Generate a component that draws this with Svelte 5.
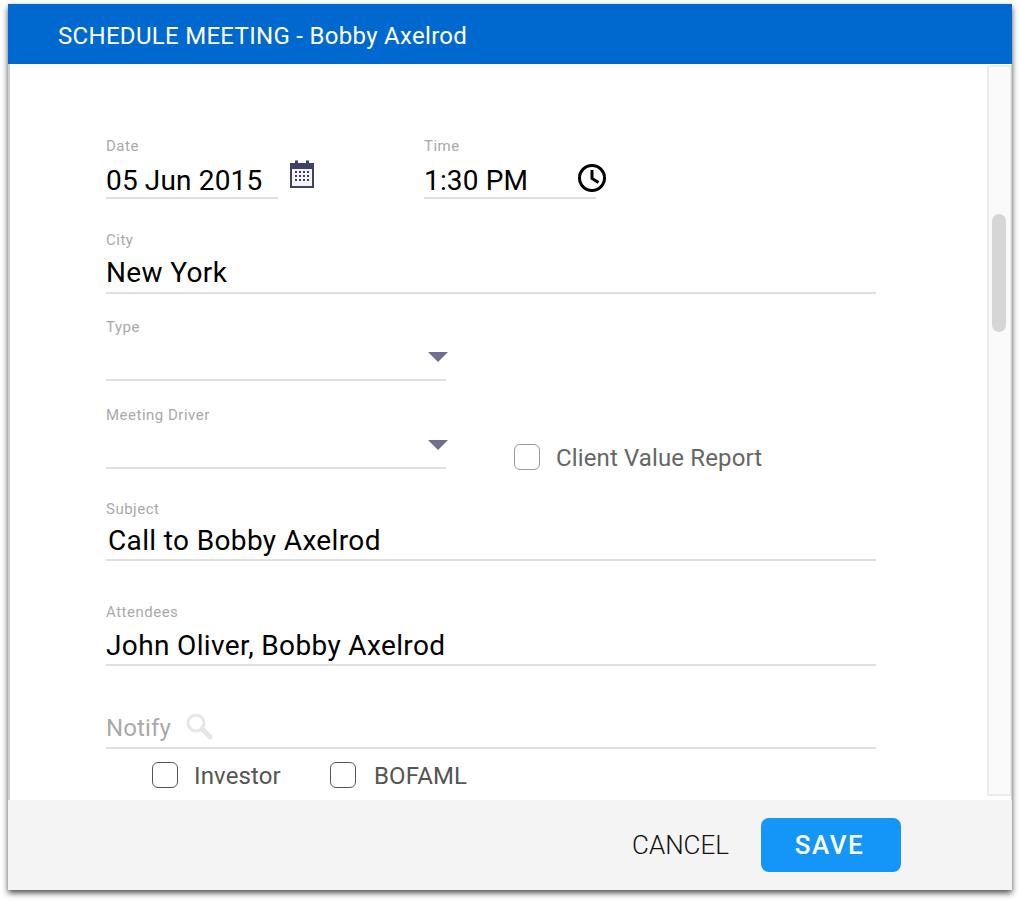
<script>
  let city = 'New York';
  let subject = 'Call to Bobby Axelrod';
  let attendees = 'John Oliver, Bobby Axelrod';
</script>

<div class="page">
  <div class="dialog">
    <header class="title">SCHEDULE MEETING - Bobby Axelrod</header>

    <div class="body">
      <form class="form">
        <div class="row date-row">
          <div class="field short">
            <span class="label">Date</span>
            <div class="value">05 Jun 2015</div>
            <svg class="cal" width="26" height="30" viewBox="0 0 26 30">
              <path fill="#3d4166" d="M1 4h5V1.5h3V4h8V1.5h3V4h5v25H1zM3 10v17h20V10z" />
              <rect x="3" y="10" width="20" height="17" fill="#f4f4f8" />
              <g fill="#3d4166">
                <rect x="6" y="12" width="2" height="2" /><rect x="10" y="12" width="2" height="2" /><rect x="14" y="12" width="2" height="2" /><rect x="18" y="12" width="2" height="2" />
                <rect x="6" y="16" width="2" height="2" /><rect x="10" y="16" width="2" height="2" /><rect x="14" y="16" width="2" height="2" /><rect x="18" y="16" width="2" height="2" />
                <rect x="6" y="20" width="2" height="2" /><rect x="10" y="20" width="2" height="2" /><rect x="14" y="20" width="2" height="2" /><rect x="18" y="20" width="2" height="2" />
              </g>
            </svg>
          </div>
          <div class="field short">
            <span class="label">Time</span>
            <div class="value">1:30 PM</div>
            <svg class="clock" width="30" height="30" viewBox="0 0 30 30" fill="none" stroke="#000" stroke-width="3">
              <circle cx="15" cy="15" r="12.5" />
              <path d="M15 7v8.500l6.500 4" />
            </svg>
          </div>
        </div>

        <div class="field city">
          <span class="label">City</span>
          <div class="value">{city}</div>
        </div>

        <div class="field select type">
          <span class="label">Type</span>
          <div class="value"></div>
          <span class="arrow"></span>
        </div>

        <div class="row driver-row">
          <div class="field select">
            <span class="label">Meeting Driver</span>
            <div class="value"></div>
            <span class="arrow"></span>
          </div>
          <label class="check report">
            <span class="box"></span>
            <span class="text">Client Value Report</span>
          </label>
        </div>

        <div class="field subject">
          <span class="label">Subject</span>
          <div class="value indented">{subject}</div>
        </div>

        <div class="field attendees">
          <span class="label">Attendees</span>
          <div class="value">{attendees}</div>
        </div>

        <div class="notify">
          <span>Notify</span>
          <svg width="28" height="28" viewBox="0 0 28 28" fill="none" stroke="#e6e6e6">
            <circle cx="11" cy="11" r="8" stroke-width="3" />
            <path d="M17 17l8 8" stroke-width="5" stroke-linecap="round" />
          </svg>
        </div>

        <div class="row checks">
          <label class="check investor"><span class="box dark"></span><span class="text">Investor</span></label>
          <label class="check bofaml"><span class="box dark"></span><span class="text">BOFAML</span></label>
        </div>
      </form>

      <div class="scrollbar"><div class="thumb"></div></div>
    </div>

    <footer class="footer">
      <button type="button" class="cancel">CANCEL</button>
      <button type="button" class="save">SAVE</button>
    </footer>
  </div>
</div>

<style>
  :global(body) {
    margin: 0;
    background: #fff;
    font-family: Roboto, "Liberation Sans", sans-serif;
  }

  .page {
    height: 902px;
    box-sizing: border-box;
    padding: 4px 8px 12px;
  }

  .dialog {
    height: 886px;
    display: flex;
    flex-direction: column;
    background: #cfcfcf;
    box-shadow: 0 3px 6px rgba(0, 0, 0, 0.7);
  }

  .title {
    height: 60px;
    flex: none;
    box-sizing: border-box;
    padding-left: 50px;
    background: #0069cf;
    color: #fff;
    font-size: 24px;
    line-height: 64px;
    letter-spacing: 0.3px;
  }

  .body {
    height: 736px;
    flex: none;
    margin: 0 1px 0 2px;
    display: flex;
    background: #fff;
    overflow: hidden;
  }

  .form {
    flex: 1;
    padding: 72px 0 0 96px;
    box-sizing: border-box;
  }

  .row {
    display: flex;
  }

  .date-row {
    gap: 146px;
  }

  .field {
    position: relative;
    width: 770px;
    border-bottom: 2px solid #e0e0e0;
    box-sizing: border-box;
  }

  .short {
    width: 172px;
    height: 63px;
  }

  .short .value {
    margin-top: 5px;
    letter-spacing: 0.15px;
  }

  .select {
    width: 340px;
    height: 64px;
  }

  .label {
    display: block;
    height: 20px;
    font-size: 15px;
    line-height: 20px;
    letter-spacing: 0.5px;
    color: #a9a9a9;
  }

  .value {
    font-size: 28px;
    line-height: 40px;
    letter-spacing: 0.36px;
    color: #000;
    white-space: nowrap;
  }

  .indented {
    padding-left: 2px;
  }

  .cal {
    position: absolute;
    left: 183px;
    top: 23px;
  }

  .clock {
    position: absolute;
    left: 153px;
    top: 27px;
  }

  .city {
    height: 64px;
    margin-top: 31px;
  }

  .city .value,
  .subject .value {
    margin-top: 3px;
  }

  .subject .value {
    margin-top: 2px;
  }

  .attendees .value {
    margin-top: 4px;
  }

  .type {
    margin-top: 23px;
  }

  .arrow {
    position: absolute;
    left: 322px;
    top: 35px;
    border-left: 10px solid transparent;
    border-right: 10px solid transparent;
    border-top: 10px solid #6d6f8e;
  }

  .driver-row {
    height: 64px;
    margin-top: 24px;
    align-items: flex-start;
  }

  .check {
    display: flex;
    align-items: flex-start;
    gap: 16px;
    font-size: 24px;
    letter-spacing: 0.13px;
    color: #666;
  }

  .text {
    margin-top: 1px;
    line-height: 28px;
  }

  .report {
    margin: 38px 0 0 68px;
  }

  .box {
    width: 26px;
    height: 26px;
    margin-top: 1px;
    flex: none;
    box-sizing: border-box;
    border: 1px solid #999;
    border-radius: 6px;
    background: #fff;
  }

  .box.dark {
    border-color: #555;
  }

  .subject {
    height: 62px;
    margin-top: 30px;
  }

  .attendees {
    height: 64px;
    margin-top: 41px;
  }

  .notify {
    width: 770px;
    height: 63px;
    margin-top: 20px;
    box-sizing: border-box;
    display: flex;
    align-items: flex-end;
    gap: 14px;
    padding-bottom: 5px;
    border-bottom: 2px solid #e0e0e0;
    font-size: 24px;
    letter-spacing: 0.13px;
    color: #aaa;
  }

  .notify svg {
    margin-bottom: 2px;
  }

  .checks {
    margin: 12px 0 0 46px;
  }

  .checks .check {
    color: #555;
  }

  .investor {
    width: 178px;
  }

  .bofaml {
    gap: 18px;
  }

  .scrollbar {
    width: 24px;
    height: 731px;
    margin-top: 1px;
    flex: none;
    box-sizing: border-box;
    padding-top: 147px;
    background: #fafafa;
    border: 2px solid #ececec;
    border-right-width: 1px;
  }

  .thumb {
    width: 14px;
    height: 118px;
    margin-left: 3px;
    border-radius: 7px;
    background: #d6d6d6;
  }

  .footer {
    height: 90px;
    flex: none;
    box-sizing: border-box;
    padding: 18px 111px 0 0;
    display: flex;
    justify-content: flex-end;
    align-items: flex-start;
    gap: 32px;
    background: #f4f4f4;
  }

  button {
    border: none;
    font-family: inherit;
    cursor: pointer;
  }

  .cancel {
    height: 54px;
    padding: 0;
    background: none;
    font-size: 26px;
    font-weight: 300;
    color: #111;
  }

  .save {
    width: 140px;
    height: 54px;
    padding: 0 3px 0 0;
    border-radius: 8px;
    background: #1496f8;
    color: #fff;
    font-size: 26px;
    font-weight: 500;
    letter-spacing: 1.5px;
  }
</style>
